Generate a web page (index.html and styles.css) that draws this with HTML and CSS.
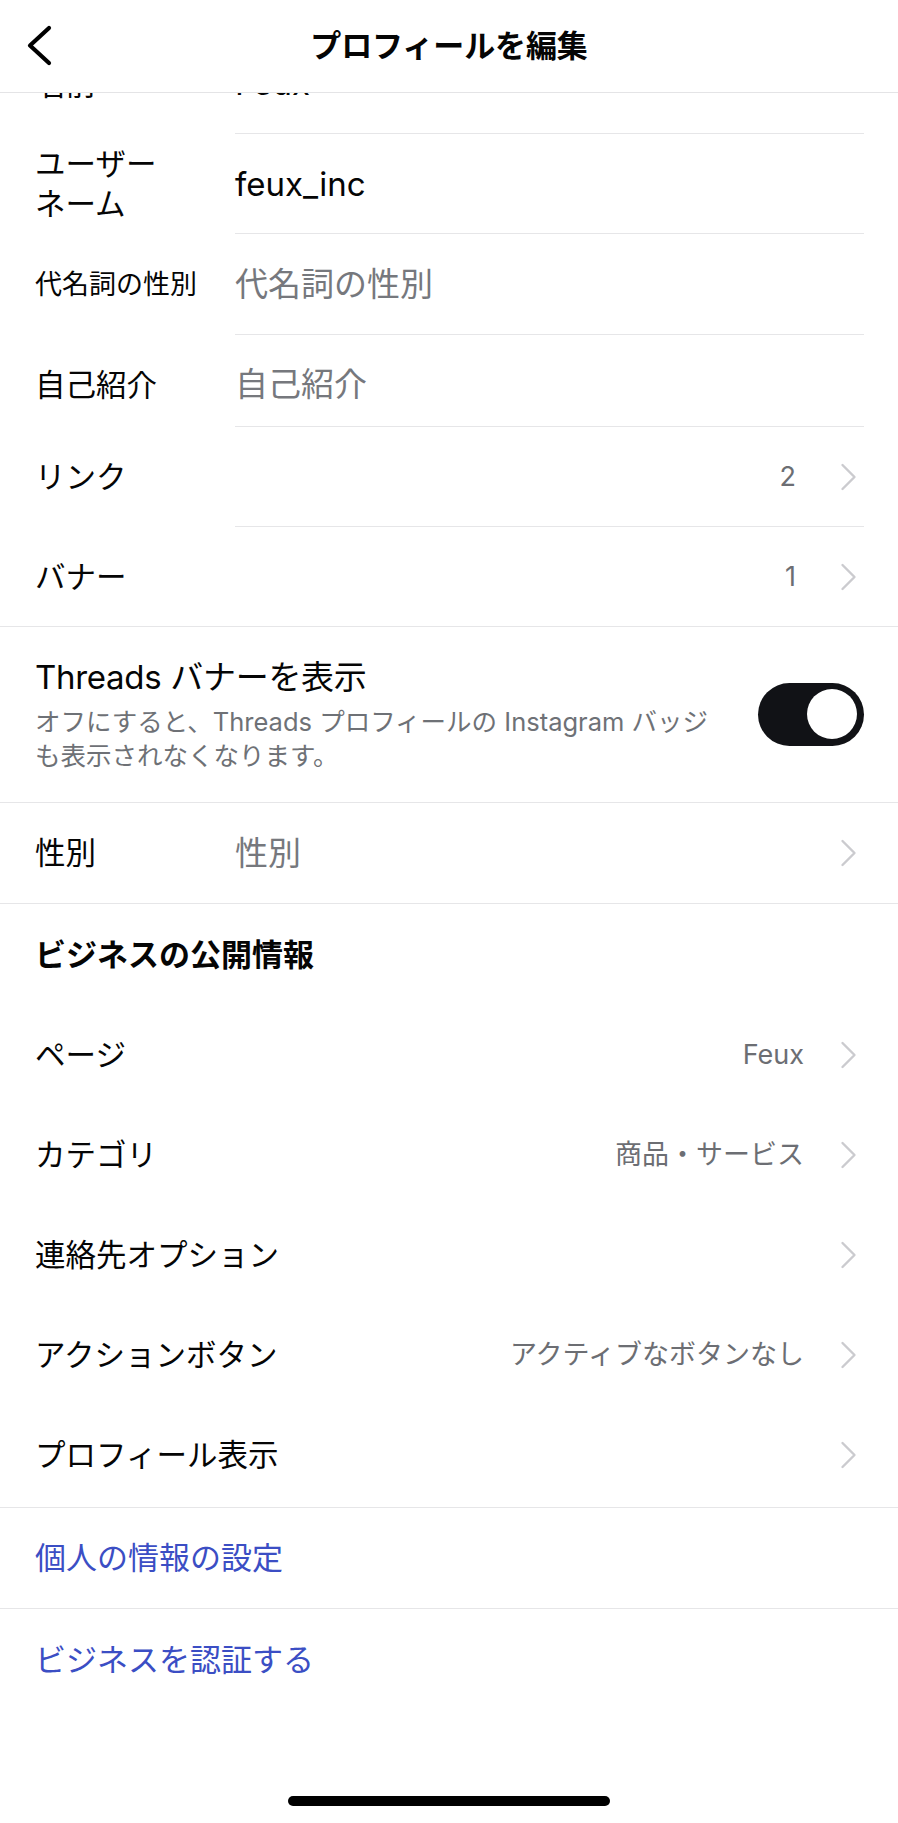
FILE: index.html
```html
<!DOCTYPE html>
<html lang="ja">
<head>
<meta charset="utf-8">
<title>プロフィールを編集</title>
<link rel="stylesheet" href="styles.css">
</head>
<body>
<div class="screen">
  <header class="topbar">
    <div class="topbar-left">
      <svg class="back-icon" width="32" height="44" viewBox="0 0 32 44" aria-hidden="true">
        <path d="M25 4 L6 21.5 L25 39" fill="none" stroke="#000" stroke-width="4.2" stroke-linecap="round" stroke-linejoin="round"/>
      </svg>
    </div>
    <h1 class="title">プロフィールを編集</h1>
    <div class="topbar-right"></div>
  </header>

  <main class="content">
    <div class="row row-name">
      <div class="label">名前</div>
      <div class="body"><span class="value">Feux</span></div>
    </div>
    <div class="row row-user">
      <div class="label">ユーザー<br>ネーム</div>
      <div class="body"><span class="value">feux_inc</span></div>
    </div>
    <div class="row row-pron">
      <div class="label label-small">代名詞の性別</div>
      <div class="body"><span class="value placeholder">代名詞の性別</span></div>
    </div>
    <div class="row row-bio">
      <div class="label">自己紹介</div>
      <div class="body"><span class="value placeholder">自己紹介</span></div>
    </div>
    <div class="row row-link">
      <div class="label">リンク</div>
      <div class="body">
        <span class="count count-num">2</span>
        <svg class="chev" width="17" height="28" viewBox="0 0 17 28" aria-hidden="true"><path d="M2.5 2 L14.5 14 L2.5 26" fill="none" stroke="#cbcbcf" stroke-width="2.4" stroke-linecap="round" stroke-linejoin="round"/></svg>
      </div>
    </div>
    <div class="row row-banner full-line">
      <div class="label">バナー</div>
      <div class="body no-line">
        <span class="count count-num">1</span>
        <svg class="chev" width="17" height="28" viewBox="0 0 17 28" aria-hidden="true"><path d="M2.5 2 L14.5 14 L2.5 26" fill="none" stroke="#cbcbcf" stroke-width="2.4" stroke-linecap="round" stroke-linejoin="round"/></svg>
      </div>
    </div>

    <div class="toggle-row">
      <div class="toggle-text">
        <div class="toggle-title">Threads バナーを表示</div>
        <div class="toggle-desc">オフにすると、Threads プロフィールの Instagram バッジ<br>も表示されなくなります。</div>
      </div>
      <div class="switch"><div class="knob"></div></div>
    </div>

    <div class="row row-gender full-line">
      <div class="label">性別</div>
      <div class="body no-line">
        <span class="value placeholder">性別</span>
        <svg class="chev" width="17" height="28" viewBox="0 0 17 28" aria-hidden="true"><path d="M2.5 2 L14.5 14 L2.5 26" fill="none" stroke="#cbcbcf" stroke-width="2.4" stroke-linecap="round" stroke-linejoin="round"/></svg>
      </div>
    </div>

    <div class="section-head">ビジネスの公開情報</div>

    <div class="biz-row">
      <div class="biz-label">ページ</div>
      <span class="count">Feux</span>
      <svg class="chev" width="17" height="28" viewBox="0 0 17 28" aria-hidden="true"><path d="M2.5 2 L14.5 14 L2.5 26" fill="none" stroke="#cbcbcf" stroke-width="2.4" stroke-linecap="round" stroke-linejoin="round"/></svg>
    </div>
    <div class="biz-row">
      <div class="biz-label">カテゴリ</div>
      <span class="count">商品・サービス</span>
      <svg class="chev" width="17" height="28" viewBox="0 0 17 28" aria-hidden="true"><path d="M2.5 2 L14.5 14 L2.5 26" fill="none" stroke="#cbcbcf" stroke-width="2.4" stroke-linecap="round" stroke-linejoin="round"/></svg>
    </div>
    <div class="biz-row">
      <div class="biz-label">連絡先オプション</div>
      <svg class="chev" width="17" height="28" viewBox="0 0 17 28" aria-hidden="true"><path d="M2.5 2 L14.5 14 L2.5 26" fill="none" stroke="#cbcbcf" stroke-width="2.4" stroke-linecap="round" stroke-linejoin="round"/></svg>
    </div>
    <div class="biz-row">
      <div class="biz-label">アクションボタン</div>
      <span class="count">アクティブなボタンなし</span>
      <svg class="chev" width="17" height="28" viewBox="0 0 17 28" aria-hidden="true"><path d="M2.5 2 L14.5 14 L2.5 26" fill="none" stroke="#cbcbcf" stroke-width="2.4" stroke-linecap="round" stroke-linejoin="round"/></svg>
    </div>
    <div class="biz-row biz-last">
      <div class="biz-label">プロフィール表示</div>
      <svg class="chev" width="17" height="28" viewBox="0 0 17 28" aria-hidden="true"><path d="M2.5 2 L14.5 14 L2.5 26" fill="none" stroke="#cbcbcf" stroke-width="2.4" stroke-linecap="round" stroke-linejoin="round"/></svg>
    </div>

    <div class="link-row with-line">個人の情報の設定</div>
    <div class="link-row">ビジネスを認証する</div>

    <div class="home-bar"></div>
  </main>
</div>
</body>
</html>
```

FILE: styles.css
```css
* {
  box-sizing: border-box;
  margin: 0;
  padding: 0;
}

body {
  margin: 0;
  background: #ffffff;
  font-family: Inter, "Noto Sans CJK JP", sans-serif;
  color: #050505;
}

.screen {
  position: relative;
  width: 898px;
  height: 1823px;
  overflow: hidden;
  background: #ffffff;
}

/* Top navigation bar lies over the scrolled list */
.topbar {
  position: absolute;
  top: 0;
  left: 0;
  right: 0;
  height: 93px;
  z-index: 2;
  background: #ffffff;
  border-bottom: 1px solid #e4e4e6;
  display: grid;
  grid-template-columns: 1fr auto 1fr;
  align-items: center;
}

.topbar-left {
  padding-left: 24px;
  display: flex;
  align-items: center;
}

.back-icon {
  display: block;
}

.title {
  font-size: 31px;
  font-weight: 700;
  line-height: 40px;
  letter-spacing: -0.1px;
}

/* List */
.content {
  padding-top: 33px;
}

.row {
  display: flex;
  align-items: stretch;
  padding-left: 35px;
  height: 100px;
}

.row.full-line {
  border-bottom: 1px solid #e6e6e8;
}

.row-name { height: 101px; }
.row-user { height: 100px; }
.row-pron { height: 101px; }
.row-bio { height: 92px; }
.row-bio .label,
.row-bio .body { padding-top: 7px; }
.row-link { height: 100px; }
.row-banner { height: 100px; }
.row-gender { height: 101px; }

.label {
  width: 200px;
  flex-shrink: 0;
  display: flex;
  align-items: center;
  font-size: 30.5px;
  line-height: 40px;
}

.label-small {
  font-size: 27px;
}

.body {
  flex: 1;
  display: flex;
  align-items: center;
  margin-right: 34px;
  padding-right: 7px;
  border-bottom: 1px solid #e6e6e8;
}

.body.no-line {
  border-bottom: none;
}

.value {
  flex: 1;
  font-size: 33px;
  line-height: 44px;
  color: #050505;
}

.value.placeholder {
  color: #76787d;
}

.count {
  margin-left: auto;
  margin-right: 36px;
  font-size: 27px;
  line-height: 36px;
  color: #6c6e73;
}

.count.count-num {
  margin-right: 44px;
}

.chev {
  display: block;
  flex-shrink: 0;
}

/* Toggle row */
.toggle-row {
  display: flex;
  align-items: center;
  padding: 27px 34px 28px 35px;
  border-bottom: 1px solid #e6e6e8;
  height: 176px;
}

.toggle-text {
  flex: 1;
}

.toggle-title {
  font-size: 33px;
  line-height: 44px;
  letter-spacing: -0.3px;
}

.toggle-desc {
  margin-top: 6px;
  font-size: 25.5px;
  line-height: 34px;
  color: #6e7176;
}

.switch {
  width: 106px;
  height: 63px;
  border-radius: 32px;
  background: #111216;
  display: flex;
  align-items: center;
  justify-content: flex-end;
  padding-right: 7px;
  flex-shrink: 0;
}

.knob {
  width: 50px;
  height: 50px;
  border-radius: 50%;
  background: #ffffff;
}

/* Business section */
.section-head {
  height: 101px;
  display: flex;
  align-items: center;
  padding-left: 35px;
  font-size: 31px;
  font-weight: 700;
  line-height: 40px;
}

.biz-row {
  height: 100px;
  display: flex;
  align-items: center;
  padding: 0 41px 0 35px;
}

.biz-row.biz-last {
  height: 103px;
  padding-bottom: 3px;
  border-bottom: 1px solid #e6e6e8;
}

.biz-label {
  font-size: 30.5px;
  line-height: 40px;
  margin-right: auto;
}

/* Blue links */
.link-row {
  height: 101px;
  display: flex;
  align-items: center;
  padding-left: 35px;
  font-size: 31px;
  line-height: 40px;
  color: #3b4ec4;
}

.link-row.with-line {
  border-bottom: 1px solid #e6e6e8;
}

.home-bar {
  width: 322px;
  height: 10px;
  border-radius: 5px;
  background: #000000;
  margin: 86px auto 0;
}
```
